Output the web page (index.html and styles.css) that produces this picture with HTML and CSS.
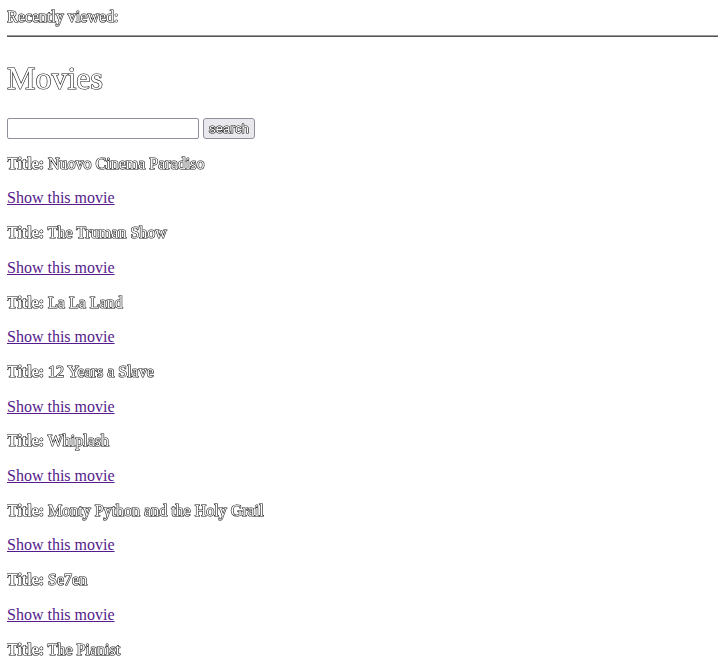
FILE: index.html
```html
<!DOCTYPE html>
<html>
<head>
<meta charset="utf-8">
<link rel="stylesheet" href="styles.css">
</head>
<body>
<div class="outline">Recently viewed:</div>
<hr class="rule">
<h1 class="outline">Movies</h1>
<form class="search">
  <input type="text" class="search-input"><button type="button" class="search-btn outline">search</button>
</form>
<p class="outline"><strong>Title:</strong> Nuovo Cinema Paradiso</p>
<p><a href="#" class="movie-link">Show this movie</a></p>
<p class="outline"><strong>Title:</strong> The Truman Show</p>
<p><a href="#" class="movie-link">Show this movie</a></p>
<p class="outline"><strong>Title:</strong> La La Land</p>
<p><a href="#" class="movie-link">Show this movie</a></p>
<p class="outline"><strong>Title:</strong> 12 Years a Slave</p>
<p><a href="#" class="movie-link">Show this movie</a></p>
<p class="outline"><strong>Title:</strong> Whiplash</p>
<p><a href="#" class="movie-link">Show this movie</a></p>
<p class="outline"><strong>Title:</strong> Monty Python and the Holy Grail</p>
<p><a href="#" class="movie-link">Show this movie</a></p>
<p class="outline"><strong>Title:</strong> Se7en</p>
<p><a href="#" class="movie-link">Show this movie</a></p>
<p class="outline"><strong>Title:</strong> The Pianist</p>
<p><a href="#" class="movie-link">Show this movie</a></p>
</body>
</html>
```
FILE: styles.css
```css
html, body {
  overflow: hidden;
}
body {
  margin: 8px 0 8px 7px;
  font-family: "Liberation Serif", serif;
  font-size: 16px;
  line-height: 18.7px;
  color: #000;
}
.outline {
  color: #fff;
  -webkit-text-stroke: 1.2px #111;
  paint-order: stroke fill;
  -webkit-font-smoothing: antialiased;
  will-change: transform;
}
.rule {
  margin: 8px 0 0 0;
  border: 0;
  border-top: 1px solid #9a9a9a;
  border-bottom: 1px solid #555;
  height: 0;
}
h1 {
  font-size: 32px;
  line-height: 38px;
  margin: 22px 0 21px;
  font-weight: normal;
}
.search {
  display: flex;
  align-items: center;
  gap: 4px;
  margin: 0;
}
.search-input {
  width: 192px;
  height: 21px;
  box-sizing: border-box;
  border: 1px solid #8f8f9d;
  border-radius: 2px;
  margin: 0;
}
.search-btn {
  font-family: "Liberation Sans", sans-serif;
  font-size: 13.33px;
  line-height: 15px;
  height: 21px;
  padding: 0 5px;
  border: 1px solid #8f8f9d;
  border-radius: 3px;
  background: #e9e9ed;
  margin: 0;
}
p {
  margin: 16px 0;
}
.movie-link {
  color: #551a8b;
}
```
